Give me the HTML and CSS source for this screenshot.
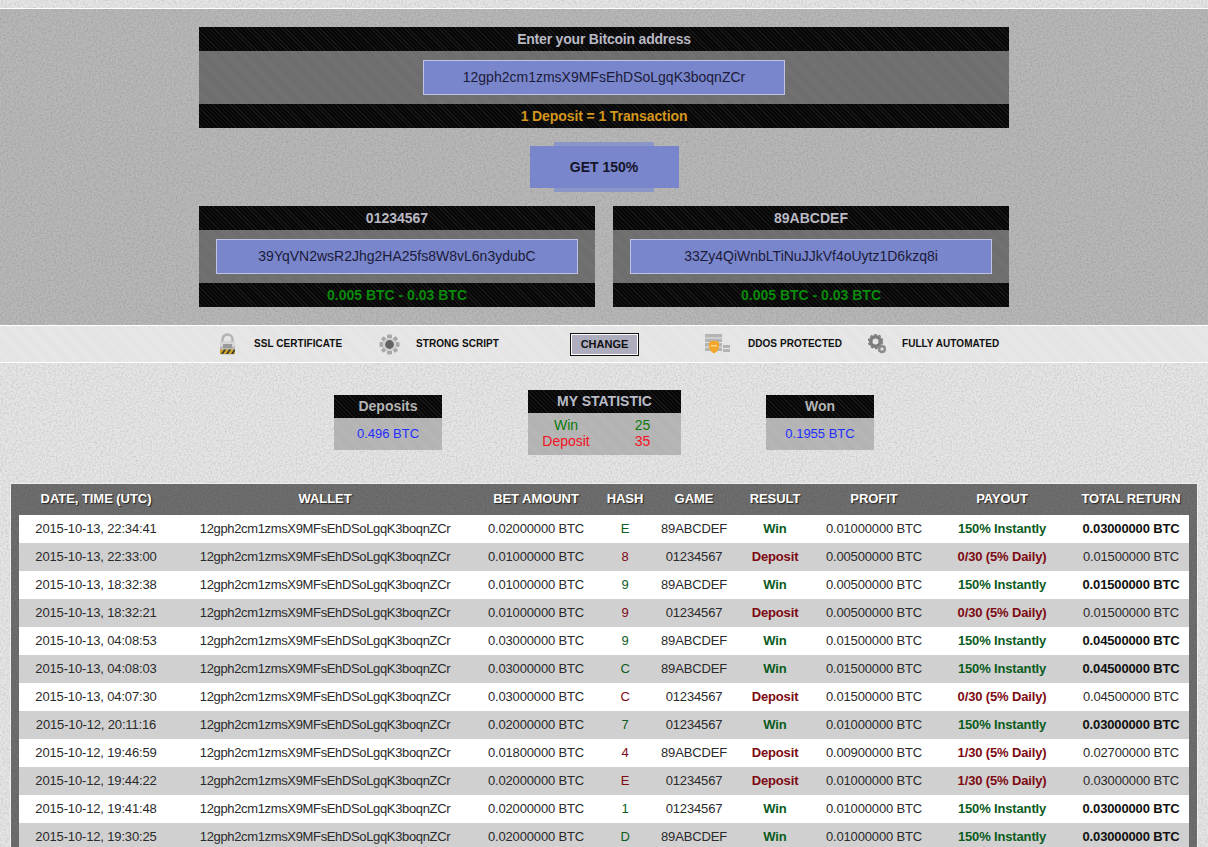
FILE: index.html
```html
<!DOCTYPE html>
<html>
<head>
    <meta charset="utf-8" />
    <title>Bitcoin Game</title>
    <link rel="stylesheet" href="styles.css">
</head>
<body>
    <section class="play">
        <div class="box box-wide">
            <div class="bar bar-title">Enter your Bitcoin address</div>
            <div class="box-mid"><div class="addr">12gph2cm1zmsX9MFsEhDSoLgqK3boqnZCr</div></div>
            <div class="bar bar-note">1 Deposit = 1 Transaction</div>
        </div>
        <div class="get"><a class="get-btn">GET 150%</a></div>
        <div class="games">
            <div class="box">
                <div class="bar">01234567</div>
                <div class="box-mid"><div class="addr">39YqVN2wsR2Jhg2HA25fs8W8vL6n3ydubC</div></div>
                <div class="bar bar-limit">0.005 BTC - 0.03 BTC</div>
            </div>
            <div class="box">
                <div class="bar">89ABCDEF</div>
                <div class="box-mid"><div class="addr">33Zy4QiWnbLTiNuJJkVf4oUytz1D6kzq8i</div></div>
                <div class="bar bar-limit">0.005 BTC - 0.03 BTC</div>
            </div>
        </div>
    </section>

    <nav class="band">
        <div class="feature f-ssl">
            <svg width="17" height="22" viewBox="0 0 17 22">
                <path d="M3.500 10V6.500a5 5 0 0 1 10 0V10" fill="none" stroke="#b4b4b4" stroke-width="2.600"/>
                <rect x="1" y="8.500" width="15" height="13" rx="1.500" fill="#b9b9b9"/>
                <rect x="1" y="8.500" width="15" height="5" fill="#d6d6d6"/>
                <rect x="4" y="11" width="9" height="4" fill="#9a9a9a"/>
                <rect x="1" y="16.500" width="15" height="4.500" fill="#c9a227"/>
                <path d="M2 21l3-4.500h2L4 21zM7 21l3-4.500h2L9 21zM12 21l3-4.500h1v1.500L14 21z" fill="#3a3a3a"/>
            </svg>
            <span>SSL CERTIFICATE</span>
        </div>
        <div class="feature f-script">
            <svg width="21" height="21" viewBox="0 0 21 21">
                <g fill="#a8a8a8">
                    <rect x="8" y="0.500" width="5" height="4" rx="1"/>
                    <rect x="8" y="16.500" width="5" height="4" rx="1"/>
                    <rect x="0.500" y="8" width="4" height="5" rx="1"/>
                    <rect x="16.500" y="8" width="4" height="5" rx="1"/>
                    <rect x="2.500" y="3" width="4.500" height="4" rx="1" transform="rotate(45 4.700 5)"/>
                    <rect x="14" y="3" width="4.500" height="4" rx="1" transform="rotate(-45 16.200 5)"/>
                    <rect x="2.500" y="14" width="4.500" height="4" rx="1" transform="rotate(-45 4.700 16)"/>
                    <rect x="14" y="14" width="4.500" height="4" rx="1" transform="rotate(45 16.200 16)"/>
                </g>
                <circle cx="10.500" cy="10.500" r="6.500" fill="#d2d2d2"/>
                <circle cx="10.500" cy="10.500" r="4.400" fill="#636363"/>
            </svg>
            <span>STRONG SCRIPT</span>
        </div>
        <a class="change">CHANGE</a>
        <div class="feature f-ddos">
            <svg width="27" height="20" viewBox="0 0 27 20">
                <g fill="#b4b4b4">
                    <rect x="2" y="0" width="17" height="3.500"/>
                    <rect x="2" y="4.500" width="17" height="3.500"/>
                    <rect x="2" y="9" width="17" height="3.500"/>
                    <rect x="2" y="13.500" width="17" height="3.500"/>
                    <rect x="20" y="11" width="7" height="3"/>
                    <rect x="20" y="15" width="7" height="3"/>
                </g>
                <path d="M6 8l5-1.500L16 8v5c0 3-2.500 5-5 6.500C8.500 18 6 16 6 13z" fill="#f2a72a"/>
                <rect x="8" y="11" width="6" height="1.500" fill="#fbd98e"/>
            </svg>
            <span>DDOS PROTECTED</span>
        </div>
        <div class="feature f-auto">
            <svg width="18" height="20" viewBox="0 0 18 20">
                <circle cx="7.500" cy="7.500" r="4.800" fill="none" stroke="#7d7d7d" stroke-width="3.600"/>
                <circle cx="7.500" cy="7.500" r="7" fill="none" stroke="#7d7d7d" stroke-width="1.400" stroke-dasharray="2.500 2"/>
                <circle cx="14" cy="15" r="2.800" fill="none" stroke="#8c8c8c" stroke-width="2.400"/>
                <circle cx="14" cy="15" r="4" fill="none" stroke="#8c8c8c" stroke-width="1" stroke-dasharray="1.500 1.500"/>
            </svg>
            <span>FULLY AUTOMATED</span>
        </div>
    </nav>

    <section class="stats">
        <div class="stat">
            <div class="bar stat-head">Deposits</div>
            <div class="stat-val">0.496 BTC</div>
        </div>
        <div class="stat stat-my">
            <div class="bar stat-head">MY STATISTIC</div>
            <div class="stat-rows">
                <span class="s-win">Win</span><span class="s-win">25</span>
                <span class="s-dep">Deposit</span><span class="s-dep">35</span>
            </div>
        </div>
        <div class="stat">
            <div class="bar stat-head">Won</div>
            <div class="stat-val">0.1955 BTC</div>
        </div>
    </section>

    <div class="history">
        <table>
            <colgroup>
                <col class="c-date"><col class="c-wallet"><col class="c-bet"><col class="c-hash"><col class="c-game">
                <col class="c-result"><col class="c-profit"><col class="c-payout"><col class="c-total">
            </colgroup>
            <thead>
                <tr><th>DATE, TIME (UTC)</th><th>WALLET</th><th>BET AMOUNT</th><th>HASH</th><th>GAME</th><th>RESULT</th><th>PROFIT</th><th>PAYOUT</th><th>TOTAL RETURN</th></tr>
            </thead>
            <tbody>
                <tr class="win"><td>2015-10-13, 22:34:41</td><td class="wal">12gph2cm1zmsX9MFsEhDSoLgqK3boqnZCr</td><td>0.02000000 BTC</td><td class="hs">E</td><td>89ABCDEF</td><td class="hl">Win</td><td>0.01000000 BTC</td><td class="hl">150% Instantly</td><td class="tot">0.03000000 BTC</td></tr>
                <tr class="dep"><td>2015-10-13, 22:33:00</td><td class="wal">12gph2cm1zmsX9MFsEhDSoLgqK3boqnZCr</td><td>0.01000000 BTC</td><td class="hs">8</td><td>01234567</td><td class="hl">Deposit</td><td>0.00500000 BTC</td><td class="hl">0/30 (5% Daily)</td><td class="tot">0.01500000 BTC</td></tr>
                <tr class="win"><td>2015-10-13, 18:32:38</td><td class="wal">12gph2cm1zmsX9MFsEhDSoLgqK3boqnZCr</td><td>0.01000000 BTC</td><td class="hs">9</td><td>89ABCDEF</td><td class="hl">Win</td><td>0.00500000 BTC</td><td class="hl">150% Instantly</td><td class="tot">0.01500000 BTC</td></tr>
                <tr class="dep"><td>2015-10-13, 18:32:21</td><td class="wal">12gph2cm1zmsX9MFsEhDSoLgqK3boqnZCr</td><td>0.01000000 BTC</td><td class="hs">9</td><td>01234567</td><td class="hl">Deposit</td><td>0.00500000 BTC</td><td class="hl">0/30 (5% Daily)</td><td class="tot">0.01500000 BTC</td></tr>
                <tr class="win"><td>2015-10-13, 04:08:53</td><td class="wal">12gph2cm1zmsX9MFsEhDSoLgqK3boqnZCr</td><td>0.03000000 BTC</td><td class="hs">9</td><td>89ABCDEF</td><td class="hl">Win</td><td>0.01500000 BTC</td><td class="hl">150% Instantly</td><td class="tot">0.04500000 BTC</td></tr>
                <tr class="win"><td>2015-10-13, 04:08:03</td><td class="wal">12gph2cm1zmsX9MFsEhDSoLgqK3boqnZCr</td><td>0.03000000 BTC</td><td class="hs">C</td><td>89ABCDEF</td><td class="hl">Win</td><td>0.01500000 BTC</td><td class="hl">150% Instantly</td><td class="tot">0.04500000 BTC</td></tr>
                <tr class="dep"><td>2015-10-13, 04:07:30</td><td class="wal">12gph2cm1zmsX9MFsEhDSoLgqK3boqnZCr</td><td>0.03000000 BTC</td><td class="hs">C</td><td>01234567</td><td class="hl">Deposit</td><td>0.01500000 BTC</td><td class="hl">0/30 (5% Daily)</td><td class="tot">0.04500000 BTC</td></tr>
                <tr class="win"><td>2015-10-12, 20:11:16</td><td class="wal">12gph2cm1zmsX9MFsEhDSoLgqK3boqnZCr</td><td>0.02000000 BTC</td><td class="hs">7</td><td>01234567</td><td class="hl">Win</td><td>0.01000000 BTC</td><td class="hl">150% Instantly</td><td class="tot">0.03000000 BTC</td></tr>
                <tr class="dep"><td>2015-10-12, 19:46:59</td><td class="wal">12gph2cm1zmsX9MFsEhDSoLgqK3boqnZCr</td><td>0.01800000 BTC</td><td class="hs">4</td><td>89ABCDEF</td><td class="hl">Deposit</td><td>0.00900000 BTC</td><td class="hl">1/30 (5% Daily)</td><td class="tot">0.02700000 BTC</td></tr>
                <tr class="dep"><td>2015-10-12, 19:44:22</td><td class="wal">12gph2cm1zmsX9MFsEhDSoLgqK3boqnZCr</td><td>0.02000000 BTC</td><td class="hs">E</td><td>01234567</td><td class="hl">Deposit</td><td>0.01000000 BTC</td><td class="hl">1/30 (5% Daily)</td><td class="tot">0.03000000 BTC</td></tr>
                <tr class="win"><td>2015-10-12, 19:41:48</td><td class="wal">12gph2cm1zmsX9MFsEhDSoLgqK3boqnZCr</td><td>0.02000000 BTC</td><td class="hs">1</td><td>01234567</td><td class="hl">Win</td><td>0.01000000 BTC</td><td class="hl">150% Instantly</td><td class="tot">0.03000000 BTC</td></tr>
                <tr class="win"><td>2015-10-12, 19:30:25</td><td class="wal">12gph2cm1zmsX9MFsEhDSoLgqK3boqnZCr</td><td>0.02000000 BTC</td><td class="hs">D</td><td>89ABCDEF</td><td class="hl">Win</td><td>0.01000000 BTC</td><td class="hl">150% Instantly</td><td class="tot">0.03000000 BTC</td></tr>
            </tbody>
        </table>
    </div>
</body>
</html>
```

FILE: styles.css
```css
* {margin: 0;padding: 0;box-sizing: border-box;}
html, body {height: 100%;overflow: hidden;}
body {
    font-family: "Liberation Sans", Arial, sans-serif;
    font-size: 14px;
    color: #222;
    padding-top: 8px;
    background-color: #e6e6e6;
    background-image: url("data:image/svg+xml,%3Csvg xmlns='http://www.w3.org/2000/svg' width='400' height='400'%3E%3Cfilter id='n'%3E%3CfeTurbulence type='fractalNoise' baseFrequency='.55' numOctaves='3'/%3E%3CfeColorMatrix values='0 0 0 0 0 0 0 0 0 0 0 0 0 0 0 0 0 0 .22 -.08'/%3E%3C/filter%3E%3Crect width='400' height='400' filter='url(%23n)'/%3E%3C/svg%3E");
}

/* top block */
.play {
    border-top: 1px solid #fff;
    padding: 18px 0;
    height: 317px;
    background-color: #b8b8b8;
    background-image: url("data:image/svg+xml,%3Csvg xmlns='http://www.w3.org/2000/svg' width='400' height='400'%3E%3Cfilter id='n'%3E%3CfeTurbulence type='fractalNoise' baseFrequency='.55' numOctaves='3'/%3E%3CfeColorMatrix values='0 0 0 0 0 0 0 0 0 0 0 0 0 0 0 0 0 0 .22 -.08'/%3E%3C/filter%3E%3Crect width='400' height='400' filter='url(%23n)'/%3E%3C/svg%3E");
}
.box-wide {width: 810px;margin: 0 auto;}
.bar {
    height: 24px;
    line-height: 24px;
    text-align: center;
    font-weight: bold;
    color: #b9b9c4;
    background-color: #0a0a0a;
    background-image: repeating-linear-gradient(45deg, #070707 0, #070707 2px, #181818 2px, #181818 3px);
}
.bar-title {letter-spacing: -.2px;}
.bar-note {color: #d3961c;letter-spacing: -.1px;}
.bar-limit {color: #0b8a0b;}
.box-mid {
    display: flex;
    justify-content: center;
    align-items: center;
    height: 53px;
    background-color: #6e6e6e;
    background-image: repeating-linear-gradient(45deg, #6c6c6c 0, #6c6c6c 1px, #737373 1px, #737373 2px);
}
.addr {
    width: 362px;
    height: 35px;
    line-height: 33px;
    text-align: center;
    color: #1b1b3a;
    background: #7986cb;
    border: 1px solid #bfc4e6;
}

.get {display: flex;justify-content: center;margin: 18px 0;isolation: isolate;}
.get-btn {
    position: relative;
    display: block;
    width: 149px;
    height: 42px;
    line-height: 42px;
    text-align: center;
    font-weight: bold;
    color: #15152b;
    background: #7986cb;
}
.get-btn::before {
    content: '';
    position: absolute;
    z-index: -1;
    top: -4px;
    bottom: -4px;
    left: 24px;
    right: 25px;
    background: #8b96c8;
}
.games {display: flex;justify-content: center;gap: 18px;}
.games .box {width: 396px;}

/* features band */
.band {
    display: flex;
    align-items: center;
    height: 38px;
    padding-left: 219px;
    border-top: 1px solid #fff;
    border-bottom: 1px solid #fff;
    background-color: #e6e6e6;
    background-image: repeating-linear-gradient(45deg, #e3e3e3 0, #e3e3e3 1px, #e8e8e8 1px, #e8e8e8 2px);
}
.feature {
    display: flex;
    align-items: center;
    font-size: 10px;
    font-weight: bold;
    letter-spacing: .05px;
    white-space: nowrap;
    color: #111;
}
.feature span {padding-bottom: 2px;}
.f-ssl {gap: 18px;}
.f-script {gap: 16px;margin-left: 37px;}
.f-ddos {gap: 18px;margin-left: 64px;}
.f-auto {gap: 16px;margin-left: 25px;}
.f-ssl span {width: 88px;}
.f-script span {width: 82px;}
.f-ddos span {width: 95px;}
.change {
    display: block;
    width: 69px;
    height: 23px;
    margin-left: 72px;
    line-height: 21px;
    text-align: center;
    font-size: 11px;
    font-weight: bold;
    color: #111;
    background: #adadbd;
    border: 1px solid #111;
    box-shadow: inset 0 0 0 1px #fff;
}

/* stats */
.stats {
    display: flex;
    justify-content: center;
    align-items: center;
    gap: 85px;
    height: 65px;
    margin: 27px 0 28px;
}
.stat {width: 108px;}
.stat-my {width: 153px;margin-left: 1px;}
.stat-head {height: 23px;line-height: 23px;color: #b4b4b4;}
.stat-my .stat-head {color: #b9bcc8;}
.stat-val {
    height: 32px;
    line-height: 32px;
    text-align: center;
    font-size: 13px;
    color: #1f2dff;
    background-color: #b4b4b4;
    background-image: repeating-linear-gradient(45deg, #b1b1b1 0, #b1b1b1 1px, #b8b8b8 1px, #b8b8b8 2px);
}
.stat-rows {
    display: grid;
    grid-template-columns: 76px 77px;
    align-content: start;
    justify-items: center;
    height: 42px;
    padding-top: 4px;
    line-height: 16px;
    background-color: #b4b4b4;
    background-image: repeating-linear-gradient(45deg, #b1b1b1 0, #b1b1b1 1px, #b8b8b8 1px, #b8b8b8 2px);
}
.s-win {color: #0a7a0a;}
.s-dep {color: #f5101f;}

/* history table */
.history {
    margin: 0 10px;
    padding: 0 8px;
    background-color: #6e6e6e;
    border: 1px solid #eee;
    background-image: url("data:image/svg+xml,%3Csvg xmlns='http://www.w3.org/2000/svg' width='400' height='400'%3E%3Cfilter id='n'%3E%3CfeTurbulence type='fractalNoise' baseFrequency='.55' numOctaves='3'/%3E%3CfeColorMatrix values='0 0 0 0 0 0 0 0 0 0 0 0 0 0 0 0 0 0 .22 -.08'/%3E%3C/filter%3E%3Crect width='400' height='400' filter='url(%23n)'/%3E%3C/svg%3E");
}
table {width: 1170px;border-collapse: collapse;table-layout: fixed;}
.c-date {width: 154px;}
.c-wallet {width: 304px;}
.c-bet {width: 118px;}
.c-hash {width: 60px;}
.c-game {width: 78px;}
.c-result {width: 84px;}
.c-profit {width: 114px;}
.c-payout {width: 142px;}
.c-total {width: 116px;}
th {
    height: 31px;
    padding-bottom: 2px;
    color: #fff;
    font-size: 13px;
    font-weight: bold;
    letter-spacing: -.05px;
    white-space: nowrap;
    text-shadow: 1px 1px 1px #222;
}
td {
    height: 28px;
    padding-bottom: 1px;
    text-align: center;
    font-size: 13px;
    letter-spacing: -.15px;
    white-space: nowrap;
    background: #fff;
    color: #2a2a2a;
}
td.wal {letter-spacing: -.35px;}
tbody tr:nth-child(even) td {background: #d0d0d0;}
.hl {font-weight: bold;}
.win .hl, .win .hs {color: #0b5c1e;}
.dep .hl, .dep .hs {color: #7d0a12;}
.win .tot {font-weight: bold;color: #111;}
```
